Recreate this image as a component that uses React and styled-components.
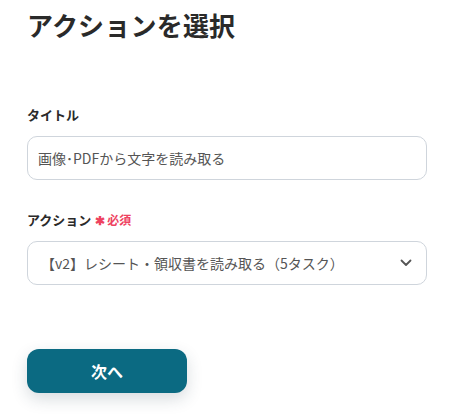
import React from "react";
import styled, { createGlobalStyle } from "styled-components";

const Global = createGlobalStyle`
  html, body { margin: 0; padding: 0; background: #fff; }
  body { font-family: "Noto Sans CJK JP", "Noto Sans", sans-serif; color: #2b2b2b; }
`;

const Page = styled.div`
  width: 450px;
  height: 415px;
  box-sizing: border-box;
  padding: 5px 23px 0 27px;
  display: flex;
  flex-direction: column;
  overflow: hidden;
`;

const Title = styled.h1`
  margin: 0;
  font-size: 26px;
  line-height: 40px;
  font-weight: 700;
  color: #2a2a2a;
  letter-spacing: 0.2px;
`;

const Field = styled.div`
  display: flex;
  flex-direction: column;
  margin-top: ${(p) => p.$top}px;
`;

const Label = styled.div`
  display: flex;
  align-items: center;
  gap: 4px;
  font-size: 13px;
  line-height: 20px;
  font-weight: 700;
  color: #2a2a2a;
  margin-bottom: 11px;
`;

const Required = styled.span`
  color: #ee4260;
  font-size: 12px;
  font-weight: 700;
  display: flex;
  align-items: center;
  gap: 2px;
`;

const Box = styled.div`
  box-sizing: border-box;
  height: 44px;
  width: 400px;
  border: 1px solid #cfd5dc;
  border-radius: 10px;
  display: flex;
  align-items: center;
  justify-content: space-between;
  padding: 0 14px 0 ${(p) => p.$pl}px;
  font-size: 14px;
  color: #555;
  background: #fff;
`;

const Button = styled.button`
  margin-top: 64px;
  width: 160px;
  height: 44px;
  border: none;
  border-radius: 12px;
  background: #0b6a82;
  color: #fff;
  font-family: inherit;
  font-size: 16px;
  font-weight: 700;
  box-shadow: 0 6px 16px rgba(40, 60, 80, 0.18);
`;

const Chevron = () => (
  <svg width="12" height="8" viewBox="0 0 12 8" fill="none">
    <path d="M1.5 1.5 L6 6 L10.5 1.5" stroke="#555" strokeWidth="1.8" strokeLinecap="round" strokeLinejoin="round" />
  </svg>
);

export default function App() {
  return (
    <>
      <Global />
      <Page>
        <Title>アクションを選択</Title>
        <Field $top={60}>
          <Label>タイトル</Label>
          <Box $pl={10}>画像･PDFから文字を読み取る</Box>
        </Field>
        <Field $top={30}>
          <Label>
            アクション
            <Required>
              <span>✱</span>必須
            </Required>
          </Label>
          <Box $pl={13}>
            <span>【v2】レシート・領収書を読み取る（5タスク）</span>
            <Chevron />
          </Box>
        </Field>
        <Button>次へ</Button>
      </Page>
    </>
  );
}
